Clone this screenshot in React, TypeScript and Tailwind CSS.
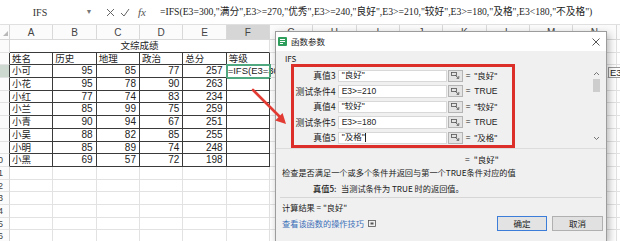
import React from "react";

const cols = ["A", "B", "C", "D", "E", "F", "G", "H", "I", "J", "K", "L", "M", "N", "O"];

const rows: [string, number, number, number, number][] = [
  ["小可", 95, 85, 77, 257],
  ["小花", 95, 78, 90, 263],
  ["小红", 77, 74, 83, 234],
  ["小兰", 85, 99, 75, 259],
  ["小青", 90, 94, 67, 251],
  ["小吴", 88, 82, 85, 255],
  ["小明", 85, 89, 74, 248],
  ["小黑", 69, 57, 72, 198],
];

const formula =
  '=IFS(E3=300,"满分",E3>=270,"优秀",E3>=240,"良好",E3>=210,"较好",E3>=180,"及格",E3<180,"不及格")';

function RowHead({ n, dark, hl }: { n: number; dark?: boolean; hl?: boolean }) {
  return (
    <div
      className={`w-[10px] shrink-0 overflow-hidden border-b border-r border-b-[#e2e2e2] ${
        dark ? "border-r-[#3a3a3a]" : "border-r-[#d6d6d6]"
      } ${hl ? "bg-[#cdd8d0]" : "bg-[#fbfbfb]"}`}
    >
      {n >= 10 && (
        <div className="flex w-[3px] justify-end">
          <span className="whitespace-nowrap text-[9px] leading-[12px] text-[#444]">{n}</span>
        </div>
      )}
    </div>
  );
}

function Blank({ count }: { count: number }) {
  return (
    <>
      {Array.from({ length: count }).map((_, i) => (
        <div key={i} className="w-[43.33px] shrink-0 border-b border-r border-[#e2e2e2]" />
      ))}
    </>
  );
}

function TCell({ children, num }: { children?: React.ReactNode; num?: boolean }) {
  return (
    <div
      className={`w-[43.33px] shrink-0 overflow-hidden whitespace-nowrap border-b border-r border-[#3a3a3a] leading-[12px] ${
        num ? "pr-[3px] text-right text-[10px]" : "pl-[2px] text-left text-[9.5px]"
      }`}
    >
      {children}
    </div>
  );
}

function CollapseBtn() {
  return (
    <div className="ml-[1px] flex h-[12px] w-[15px] shrink-0 items-center justify-center border border-[#b4b4b4] bg-[#e4e4e4]">
      <svg width="9" height="7" viewBox="0 0 9 7">
        <rect x="0.5" y="0.5" width="5" height="3" fill="none" stroke="#555" strokeWidth="0.8" />
        <path d="M4 3 L7.5 6.2" stroke="#555" strokeWidth="0.9" />
        <path d="M7.8 4 L7.8 6.4 L5.6 6.4" fill="none" stroke="#555" strokeWidth="0.8" />
      </svg>
    </div>
  );
}

function ArgRow({ label, value, result, cursor }: { label: string; value: string; result: string; cursor?: boolean }) {
  return (
    <div className="flex h-[15.5px] items-center">
      <div className="w-[43px] shrink-0 whitespace-nowrap pr-[1px] text-right text-[8.8px] text-[#222]">{label}</div>
      <div className="ml-[1px] flex h-[12.5px] w-[109px] shrink-0 items-center border border-[#d8d8d8] bg-white pl-[3px] text-[8.5px] text-[#222]">
        <span className="font-['Liberation_Sans','Noto_Sans_CJK_SC',sans-serif]">{value}</span>
        {cursor && <span className="ml-[0.5px] inline-block h-[9px] w-[1px] bg-[#222]" />}
      </div>
      <CollapseBtn />
      <div className="ml-[3px] whitespace-nowrap text-[8.5px] text-[#222]">
        = <span className="ml-[2px] font-['Liberation_Sans','Noto_Sans_CJK_SC',sans-serif]">{result}</span>
      </div>
    </div>
  );
}

export default function App() {
  return (
    <div className="relative h-[241px] w-[620px] overflow-hidden bg-white font-['Liberation_Sans','Noto_Sans_CJK_SC',sans-serif] text-[#222]">
      {/* formula bar */}
      <div className="flex h-[25px] items-center border-b border-[#e0e0e0] bg-white">
        <div className="w-[80px] text-center font-['Liberation_Serif','Noto_Sans_CJK_SC',serif] text-[10px] text-[#333]">IFS</div>
        <div className="flex w-[18px] justify-center text-[7px] text-[#777]">▼</div>
        <div className="ml-[5px] flex w-[14px] justify-center">
          <svg width="9" height="9" viewBox="0 0 9 9">
            <path d="M1 1 L8 8 M8 1 L1 8" stroke="#666" strokeWidth="1" />
          </svg>
        </div>
        <div className="ml-[1px] flex w-[14px] justify-center">
          <svg width="10" height="9" viewBox="0 0 10 9">
            <path d="M1 5 L4 8 L9 1" fill="none" stroke="#666" strokeWidth="1" />
          </svg>
        </div>
        <div className="ml-[3px] flex w-[14px] justify-center font-['Liberation_Serif',serif] text-[11px] italic text-[#555]">fx</div>
        <div className="ml-[11px] whitespace-nowrap font-['Liberation_Serif','Noto_Sans_CJK_SC',serif] text-[9.7px] text-[#222]">
          {formula}
        </div>
      </div>

      {/* column headers */}
      <div className="flex h-[15px]">
        <div className="flex w-[10px] shrink-0 items-end justify-start border-b border-r border-[#d6d6d6] bg-[#fbfbfb] pb-[3px] pl-[3px]">
          <svg width="5" height="5" viewBox="0 0 5 5">
            <path d="M5 0 L5 5 L0 5 Z" fill="#b8b8b8" />
          </svg>
        </div>
        {cols.map((c) => (
          <div
            key={c}
            className={`flex w-[43.33px] shrink-0 items-center justify-center border-b border-r border-[#d9d9d9] text-[10px] text-[#444] ${
              c === "F" ? "bg-[#d5d6d5]" : "bg-[#fbfbfb]"
            }`}
          >
            {c}
          </div>
        ))}
      </div>

      {/* row 1 title */}
      <div className="flex h-[12.7px]">
        <RowHead n={1} />
        <div className="w-[260px] shrink-0 border-b border-r border-b-[#3a3a3a] border-r-[#e2e2e2] text-center text-[9.5px] leading-[12px]">
          文综成绩
        </div>
        <Blank count={9} />
      </div>

      {/* row 2 headers */}
      <div className="flex h-[12.7px]">
        <RowHead n={2} dark />
        {["姓名", "历史", "地理", "政治", "总分", "等级"].map((h) => (
          <TCell key={h}>{h}</TCell>
        ))}
        <Blank count={9} />
      </div>

      {rows.map((r, i) => (
        <div key={r[0]} className="flex h-[12.7px]">
          <RowHead n={i + 3} dark hl={i === 0} />
          <TCell>{r[0]}</TCell>
          <TCell num>{r[1]}</TCell>
          <TCell num>{r[2]}</TCell>
          <TCell num>{r[3]}</TCell>
          <TCell num>{r[4]}</TCell>
          {i === 0 ? (
            <div className="w-[43.33px] shrink-0 whitespace-nowrap border-b border-r border-[#3a3a3a] pl-[1px] text-[9.5px] leading-[12px] text-[#222] outline outline-2 -outline-offset-1 outline-[#4fa87f]">
              =IFS(E3=300,"满分"
            </div>
          ) : (
            <TCell />
          )}
          <Blank count={9} />
        </div>
      ))}

      {[11, 12, 13, 14, 15, 16].map((n) => (
        <div key={n} className="flex h-[12.7px]">
          <RowHead n={n} />
          <Blank count={15} />
        </div>
      ))}

      {/* cell editor overflow visible at right */}
      <div className="absolute left-[608px] top-[67px] h-[11px] w-[20px] border border-[#9a9a9a] bg-white pl-[1px] text-[9.5px] leading-[10px]">
        E3
      </div>

      {/* dialog */}
      <div className="absolute left-[275px] top-[31px] flex h-[211px] w-[332px] flex-col border border-[#9c9c9c] bg-[#f0f0f0] font-['Noto_Sans_CJK_SC',sans-serif] text-[#1a1a1a] shadow-[2px_3px_8px_rgba(0,0,0,0.3)]">
        <div className="flex h-[19px] shrink-0 items-center bg-white">
          <svg className="ml-[2px]" width="9" height="9" viewBox="0 0 9 9">
            <rect x="0" y="0" width="9" height="9" rx="1" fill="#2f9e5c" />
            <rect x="2" y="2" width="5" height="1" fill="#fff" />
            <rect x="2" y="4" width="5" height="1" fill="#fff" />
            <rect x="2" y="6" width="3" height="1" fill="#fff" />
          </svg>
          <span className="ml-[4px] text-[8.5px]">函数参数</span>
          <svg className="ml-auto mr-[6px]" width="8" height="8" viewBox="0 0 8 8">
            <path d="M0.5 0.5 L7.5 7.5 M7.5 0.5 L0.5 7.5" stroke="#444" strokeWidth="0.9" />
          </svg>
        </div>

        <div className="ml-[9px] mt-[3px] h-[10px] text-[8px] leading-[10px] text-[#222]">IFS</div>

        {/* argument panel */}
        <div className="flex h-[85px] shrink-0 border-b border-[#dcdcdc]">
          <div className="ml-[14.7px] h-[84px] w-[224px] shrink-0 border-[3px] border-[#dc2f2a] pt-[1px]">
            <ArgRow label="真值3" value={'"良好"'} result={'"良好"'} />
            <ArgRow label="测试条件4" value="E3>=210" result="TRUE" />
            <ArgRow label="真值4" value={'"较好"'} result={'"较好"'} />
            <ArgRow label="测试条件5" value="E3>=180" result="TRUE" />
            <ArgRow label="真值5" value={'"及格"'} result={'"及格"'} cursor />
          </div>
          <div className="flex-1" />
          <div className="mr-[5px] mt-[4px] flex h-[78px] w-[10px] flex-col items-center">
            <svg className="mt-[3px]" width="7" height="5" viewBox="0 0 7 5">
              <path d="M1 4 L3.5 1.5 L6 4" fill="none" stroke="#666" strokeWidth="0.9" />
            </svg>
            <div className="mt-[3px] h-[13px] w-[7px] bg-[#cdcdcd]" />
            <div className="flex-1" />
            <svg className="mb-[5px]" width="7" height="5" viewBox="0 0 7 5">
              <path d="M1 1 L3.5 3.5 L6 1" fill="none" stroke="#666" strokeWidth="0.9" />
            </svg>
          </div>
        </div>

        <div className="ml-[189px] mt-[4px] h-[12px] text-[8.5px] leading-[12px]">
          = <span className="ml-[2px]">"良好"</span>
        </div>
        <div className="ml-[6px] mt-[1px] h-[12px] whitespace-nowrap text-[8.2px] leading-[12px] text-[#222]">
          检查是否满足一个或多个条件并返回与第一个TRUE条件对应的值
        </div>
        <div className="mt-[4px] flex h-[12px] items-center whitespace-nowrap text-[8.2px] leading-[12px]">
          <span className="ml-[37px] w-[28px] font-medium">真值5:</span>
          <span className="text-[#222]">当测试条件为 TRUE 时的返回值。</span>
        </div>
        <div className="mx-[4px] mt-[3px] border-b border-[#d6d6d6]" />
        <div className="ml-[6px] mt-[3px] h-[12px] text-[8.2px] leading-[12px]">计算结果 = "良好"</div>
        <div className="mt-[3px] flex h-[15px] items-center">
          <span className="ml-[6px] text-[8.2px] text-[#3a6fb8]">查看该函数的操作技巧</span>
          <svg className="ml-[4px]" width="8" height="7" viewBox="0 0 8 7">
            <rect x="0.5" y="0.5" width="7" height="6" fill="none" stroke="#555" strokeWidth="0.8" />
            <rect x="2.5" y="2.5" width="3" height="2" fill="#555" />
          </svg>
          <div className="ml-auto flex h-[15px] w-[50px] items-center justify-center border border-[#3b7dd8] bg-[#e3e3e3] text-[8.5px]">
            确定
          </div>
          <div className="ml-[5px] mr-[3px] flex h-[15px] w-[51px] items-center justify-center border border-[#b0b0b0] bg-[#e1e1e1] text-[8.5px]">
            取消
          </div>
        </div>
      </div>

      {/* red arrow */}
      <svg className="absolute left-[245px] top-[80px]" width="50" height="55" viewBox="0 0 50 55">
        <path d="M8 10 L35 37" stroke="#e23b34" strokeWidth="2.6" strokeLinecap="round" />
        <path d="M41 44 L30.2 40.5 L37.6 33.1 Z" fill="#e23b34" />
      </svg>
    </div>
  );
}
